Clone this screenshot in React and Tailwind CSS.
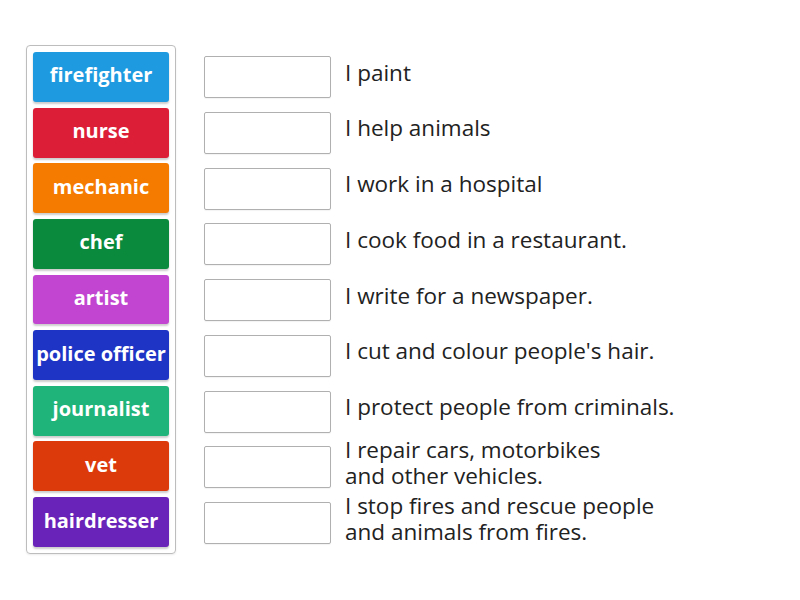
const tiles = [
  { label: "firefighter", color: "bg-[#1e9be0]" },
  { label: "nurse", color: "bg-[#dc1e37]" },
  { label: "mechanic", color: "bg-[#f57a00]" },
  { label: "chef", color: "bg-[#0a8a3c]" },
  { label: "artist", color: "bg-[#c145d0]" },
  { label: "police officer", color: "bg-[#1e34c4]" },
  { label: "journalist", color: "bg-[#1fb57a]" },
  { label: "vet", color: "bg-[#dc3a0b]" },
  { label: "hairdresser", color: "bg-[#6a23b8]" },
];

const clues = [
  ["I paint"],
  ["I help animals"],
  ["I work in a hospital"],
  ["I cook food in a restaurant."],
  ["I write for a newspaper."],
  ["I cut and colour people's hair."],
  ["I protect people from criminals."],
  ["I repair cars, motorbikes", "and other vehicles."],
  ["I stop fires and rescue people", "and animals from fires."],
];

const App = () => {
  return (
    <div className="w-[800px] h-[600px] bg-white flex font-['Open_Sans',sans-serif] pt-[45px] pl-[26px]">
      <div className="w-[150px] h-[509px] border border-[#bdbdbd] rounded-[4px] p-[6px] flex flex-col gap-[5.75px] shadow-[0_1px_2px_rgba(0,0,0,0.08)]">
        {tiles.map(t => (
          <div
            key={t.label}
            className={`${t.color} h-[50px] rounded-[3px] flex items-center justify-center text-white font-bold text-[20px] shadow-[0_2px_2px_rgba(0,0,0,0.2)] whitespace-nowrap pb-[3px]`}
          >
            {t.label}
          </div>
        ))}
      </div>
      <div className="ml-[28px] pt-[7px] flex flex-col gap-[5.75px]">
        {clues.map((lines, i) => (
          <div key={i} className="h-[50px] flex items-center">
            <div className="w-[127px] h-[42px] border border-[#b0b0b0] rounded-[2px] bg-white shadow-[0_1px_1px_rgba(0,0,0,0.05)]"></div>
            <div className="ml-[14px] text-[22.5px] leading-[26px] text-[#222] -mt-[9px]">
              {lines.map(l => (
                <div key={l} className="whitespace-nowrap">{l}</div>
              ))}
            </div>
          </div>
        ))}
      </div>
    </div>
  );
};

export default App;
